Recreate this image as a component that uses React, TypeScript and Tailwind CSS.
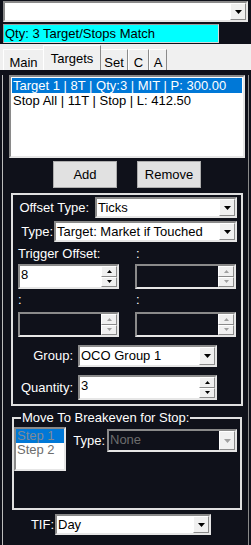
import React from 'react'

const sunken = 'border-2 border-t-[#8a8a8a] border-l-[#8a8a8a] border-b-[#e6e6e6] border-r-[#e6e6e6]'
const raised = 'border border-t-[#ffffff] border-l-[#ffffff] border-b-[#8a8a8a] border-r-[#8a8a8a]'

function Arrow({ size = 'lg', up = false, color = '#000' }: { size?: 'lg' | 'sm'; up?: boolean; color?: string }) {
  const w = size === 'lg' ? 7 : 5
  const h = size === 'lg' ? 4 : 3
  const pts = up ? `0,${h} ${w},${h} ${w / 2},0` : `0,0 ${w},0 ${w / 2},${h}`
  return (
    <svg width={w} height={h} viewBox={`0 0 ${w} ${h}`}>
      <polygon points={pts} fill={color} />
    </svg>
  )
}

function Combo({ value, w, h = 21, disabled = false }: { value: string; w: number; h?: number; disabled?: boolean }) {
  return (
    <div
      className={`${sunken} flex items-stretch ${disabled ? 'bg-transparent' : 'bg-white'}`}
      style={{ width: w, height: h }}
    >
      <div className={`flex-1 pl-[1px] leading-[17px] ${disabled ? 'text-[#6d6d6d]' : 'text-black'}`}>{value}</div>
      <div className={`w-[16px] bg-[#f0f0f0] ${raised} flex items-center justify-center`}>
        <Arrow color={disabled ? '#a0a0a0' : '#000'} />
      </div>
    </div>
  )
}

function Spinner({ value, w, h = 25, disabled = false }: { value?: string; w: number; h?: number; disabled?: boolean }) {
  return (
    <div
      className={`${sunken} flex items-stretch ${disabled ? 'bg-transparent' : 'bg-white'}`}
      style={{ width: w, height: h }}
    >
      <div className="flex-1 pl-[1px] leading-[17px] text-black">{value}</div>
      <div className="w-[16px] flex flex-col">
        <div className={`flex-1 bg-[#f0f0f0] ${raised} flex items-center justify-center`}>
          <Arrow size="sm" up color={disabled ? '#a0a0a0' : '#000'} />
        </div>
        <div className={`flex-1 bg-[#f0f0f0] ${raised} flex items-center justify-center`}>
          <Arrow size="sm" color={disabled ? '#a0a0a0' : '#000'} />
        </div>
      </div>
    </div>
  )
}

const TABS = [
  { label: 'Main', w: 41 },
  { label: 'Targets', w: 56, active: true },
  { label: 'Set', w: 28 },
  { label: 'C', w: 21 },
  { label: 'A', w: 18 },
]

export default function App() {
  return (
    <div className="w-[251px] h-[545px] overflow-hidden bg-[#0f111a] text-[13px] text-white font-['Liberation_Sans',Arial,sans-serif]">
      {/* top selector */}
      <div className="pl-[3px] pt-[1px]">
        <Combo value="" w={245} h={21} />
      </div>

      <div className="ml-[3px] mt-[2px] w-[216px] h-[19px] bg-[#00ffff] border border-t-[#9a9a9a] border-l-[#9a9a9a] border-b-[#d8d8d8] border-r-[#d8d8d8] text-black leading-[17px] pl-[1px]">
        Qty: 3 Target/Stops Match
      </div>

      {/* tab strip */}
      <div className="mt-[1px] h-[26px] bg-[#f0f0f0] flex items-end pl-[3px] text-black">
        {TABS.map((t) =>
          t.active ? (
            <div
              key={t.label}
              className="h-[25px] bg-[#f0f0f0] border-t border-l border-t-white border-l-white border-r border-r-[#8a8a8a] flex justify-center pt-[3px] -ml-[1px] -mr-[1px] z-10"
              style={{ width: t.w + 2 }}
            >
              {t.label}
            </div>
          ) : (
            <div
              key={t.label}
              className="h-[21px] bg-[#f0f0f0] border-t border-l border-t-white border-l-white border-r border-r-[#8a8a8a] flex justify-center pt-[3px]"
              style={{ width: t.w }}
            >
              {t.label}
            </div>
          )
        )}
      </div>

      {/* tab page */}
      <div className="mx-[2px] h-[475px] border-l border-r border-l-[#bdbdbd] border-r-[#8a8a8a]">
        <div className={`ml-[6px] mt-[5px] w-[236px] h-[83px] bg-white ${sunken} p-[1px] text-black`}>
          <div className="h-[15px] leading-[15px] bg-[#0078d7] text-white pl-[1px]">Target 1 | 8T | Qty:3 | MIT | P: 300.00</div>
          <div className="h-[15px] leading-[15px] pl-[1px]">Stop All | 11T | Stop | L: 412.50</div>
        </div>

        <div className="mt-[3px] flex text-black">
          <div className={`ml-[50px] w-[64px] h-[27px] bg-[#e1e1e1] border border-[#adadad] flex items-center justify-center`}>Add</div>
          <div className={`ml-[20px] w-[64px] h-[27px] bg-[#e1e1e1] border border-[#adadad] flex items-center justify-center`}>Remove</div>
        </div>

        {/* settings group */}
        <div className="ml-[8px] mt-[5px] w-[232px] h-[213px] border-2 border-[#e0e0e0]">
          <div className="mt-[2px] flex items-center">
            <div className="w-[82px] text-right pr-[6px]">Offset Type:</div>
            <Combo value="Ticks" w={142} />
          </div>
          <div className="mt-[3px] flex items-center">
            <div className="w-[41px] text-right pr-[1px]">Type:</div>
            <Combo value="Target: Market if Touched" w={183} />
          </div>

          <div className="mt-[4px] flex h-[16px] leading-[16px] pl-[5px]">
            <div className="w-[118px]">Trigger Offset:</div>
            <div>:</div>
          </div>
          <div className="mt-[2px] flex pl-[5px]">
            <div className="w-[117px]"><Spinner value="8" w={101} /></div>
            <Spinner w={101} disabled />
          </div>

          <div className="mt-[3px] flex h-[16px] leading-[16px] pl-[5px]">
            <div className="w-[118px]">:</div>
            <div>:</div>
          </div>
          <div className="mt-[4px] flex pl-[5px]">
            <div className="w-[117px]"><Spinner w={101} disabled /></div>
            <Spinner w={101} disabled />
          </div>

          <div className="mt-[8px] flex items-center">
            <div className="w-[65px] text-right pr-[5px]">Group:</div>
            <Combo value="OCO Group 1" w={139} h={22} />
          </div>
          <div className="mt-[8px] flex items-center">
            <div className="w-[65px] text-right pr-[5px]">Quantity:</div>
            <Spinner value="3" w={139} />
          </div>
        </div>

        {/* breakeven group */}
        <div className="relative ml-[9px] mt-[11px] w-[230px] h-[93px] border-2 border-[#e0e0e0]">
          <div className="absolute -top-[9px] left-[7px] px-[1px] bg-[#0f111a] leading-[16px]">Move To Breakeven for Stop:</div>
          <div className="mt-[8px] flex items-start">
            <div className={`w-[52px] h-[44px] bg-white ${sunken} p-[0px]`}>
              <div className="h-[14px] leading-[14px] bg-[#0078d7] text-[#7f8a96] pl-[1px]">Step 1</div>
              <div className="h-[14px] leading-[14px] text-[#6d6d6d] pl-[1px]">Step 2</div>
            </div>
            <div className="ml-[3px] mt-[2px] flex items-center">
              <div className="w-[38px] text-right pr-[2px]">Type:</div>
              <Combo value="None" w={130} h={23} disabled />
            </div>
          </div>
        </div>

        <div className="mt-[4px] flex items-center">
          <div className="w-[52px] text-right pr-[1px]">TIF:</div>
          <Combo value="Day" w={156} />
        </div>
      </div>
    </div>
  )
}
